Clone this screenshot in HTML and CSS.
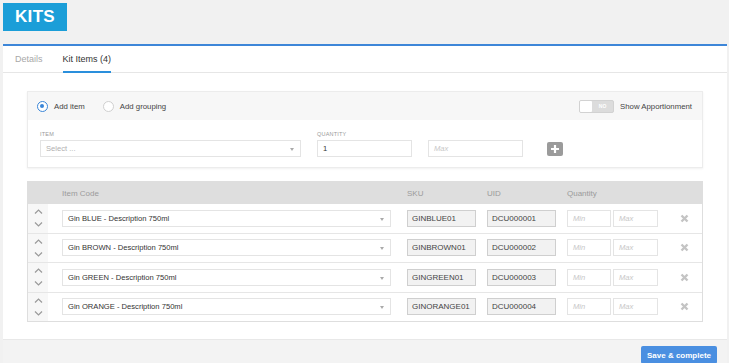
FILE: index.html
```html
<!DOCTYPE html>
<html lang="en">
<head>
    <meta charset="UTF-8">
    <title>Kits</title>
    <link rel="stylesheet" href="styles.css">
</head>
<body>
    <div class="top">
        <div class="badge">KITS</div>
    </div>

    <div class="panel">
        <!-- Tabs -->
        <div class="tabs">
            <span class="tab">Details</span>
            <span class="tab active">Kit Items (4)</span>
        </div>

        <div class="panel-body">
            <!-- Add item card -->
            <div class="card">
                <div class="card-bar">
                    <label class="radio checked"><span class="dot"></span>Add item</label>
                    <label class="radio"><span class="dot"></span>Add grouping</label>
                    <div class="apportion">
                        <span class="toggle"><span class="knob"></span><span class="toggle-text">NO</span></span>
                        Show Apportionment
                    </div>
                </div>
                <div class="card-fields">
                    <div class="field">
                        <div class="field-label">ITEM</div>
                        <div class="select item-select"><span class="placeholder">Select ...</span><span class="caret"></span></div>
                    </div>
                    <div class="field">
                        <div class="field-label">QUANTITY</div>
                        <div class="input qty-input">1</div>
                    </div>
                    <div class="field">
                        <div class="field-label">&nbsp;</div>
                        <div class="input qty-input"><span class="placeholder italic">Max</span></div>
                    </div>
                    <div class="field">
                        <div class="field-label">&nbsp;</div>
                        <span class="btn-plus">
                            <svg width="10" height="10" viewBox="0 0 10 10"><path d="M5 1v8M1 5h8" stroke="#fff" stroke-width="2.2"/></svg>
                        </span>
                    </div>
                </div>
            </div>

            <!-- Items table -->
            <div class="items">
                <div class="row head">
                    <div class="cell move"></div>
                    <div class="cell code">Item Code</div>
                    <div class="cell sku">SKU</div>
                    <div class="cell uid">UID</div>
                    <div class="cell qty">Quantity</div>
                    <div class="cell del"></div>
                </div>
                <div id="itemRows"></div>
            </div>
        </div>

        <div class="footer">
            <button class="btn-save">Save &amp; complete</button>
        </div>
    </div>

    <script>
        const items = [
            { name: "Gin BLUE - Description 750ml", sku: "GINBLUE01", uid: "DCU000001" },
            { name: "Gin BROWN - Description 750ml", sku: "GINBROWN01", uid: "DCU000002" },
            { name: "Gin GREEN - Description 750ml", sku: "GINGREEN01", uid: "DCU000003" },
            { name: "Gin ORANGE - Description 750ml", sku: "GINORANGE01", uid: "DCU000004" }
        ];

        const up = '<svg width="9" height="5" viewBox="0 0 9 5"><path d="M1 4.5L4.5 1 8 4.5" fill="none" stroke="#9a9a9a" stroke-width="1.2"/></svg>';
        const down = '<svg width="9" height="5" viewBox="0 0 9 5"><path d="M1 0.5L4.5 4 8 0.5" fill="none" stroke="#9a9a9a" stroke-width="1.2"/></svg>';
        const cross = '<svg width="9" height="9" viewBox="0 0 9 9"><path d="M1.5 1.5l6 6M7.5 1.5l-6 6" stroke="#c4c4c4" stroke-width="2.4"/></svg>';

        const rows = document.getElementById("itemRows");
        items.forEach(item => {
            const row = document.createElement("div");
            row.className = "row";
            row.innerHTML = `
                <div class="cell move"><span>${up}</span><span>${down}</span></div>
                <div class="cell code"><div class="select row-select">${item.name}<span class="caret"></span></div></div>
                <div class="cell sku"><div class="input readonly">${item.sku}</div></div>
                <div class="cell uid"><div class="input readonly">${item.uid}</div></div>
                <div class="cell qty">
                    <div class="input min"><span class="placeholder italic">Min</span></div>
                    <div class="input max"><span class="placeholder italic">Max</span></div>
                </div>
                <div class="cell del">${cross}</div>
            `;
            rows.appendChild(row);
        });
    </script>
</body>
</html>
```

FILE: styles.css
```css
* {
    margin: 0;
    padding: 0;
    box-sizing: border-box;
}

body {
    font-family: 'Liberation Sans', Arial, sans-serif;
    background-color: #f1f1f1;
    color: #333;
    font-size: 8px;
    overflow: hidden;
}

/* Title badge */
.top {
    padding: 3px 3px 0;
    height: 44px;
}

.badge {
    width: 64px;
    height: 28px;
    background-color: #1b9ed8;
    color: #fff;
    font-size: 17px;
    font-weight: bold;
    display: flex;
    align-items: center;
    justify-content: center;
    letter-spacing: 0.3px;
}

/* Main panel */
.panel {
    margin: 0 2px 0 3px;
    background-color: #fff;
    border-top: 2px solid #3d86d8;
}

.tabs {
    display: flex;
    gap: 20px;
    height: 27px;
    padding-left: 12px;
    border-bottom: 1px solid #e6e6e6;
}

.tab {
    display: flex;
    align-items: center;
    font-size: 9px;
    color: #a8a8a8;
    border-bottom: 2px solid transparent;
    margin-bottom: -1px;
    padding-top: 1px;
}

.tab.active {
    color: #333;
    border-bottom-color: #2a8fdc;
}

.panel-body {
    padding: 18px 24px 17px;
}

/* Add item card */
.card {
    border: 1px solid #ececec;
    box-shadow: 0 1px 2px rgba(0, 0, 0, 0.06);
    margin-bottom: 13px;
}

.card-bar {
    display: flex;
    align-items: center;
    height: 28px;
    padding: 0 10px 0 9px;
    background-color: #f7f7f7;
    font-size: 7.8px;
}

.radio {
    display: flex;
    align-items: center;
    gap: 6px;
    margin-right: 18px;
    color: #444;
}

.radio .dot {
    width: 11px;
    height: 11px;
    border-radius: 50%;
    border: 1.5px solid #d0d0d0;
    background-color: #fff;
    position: relative;
}

.radio.checked .dot {
    border-color: #3a86d8;
}

.radio.checked .dot::after {
    content: "";
    position: absolute;
    left: 2px;
    top: 2px;
    width: 4px;
    height: 4px;
    border-radius: 50%;
    background-color: #3a86d8;
}

.apportion {
    margin-left: auto;
    display: flex;
    align-items: center;
    gap: 6px;
    color: #444;
}

.toggle {
    display: flex;
    align-items: center;
    width: 35px;
    height: 13px;
    background-color: #dcdcdc;
    border: 1px solid #d2d2d2;
    border-radius: 2px;
}

.toggle .knob {
    width: 12px;
    height: 11px;
    background-color: #fff;
    border-radius: 1px;
}

.toggle-text {
    flex: 1;
    text-align: center;
    font-size: 5px;
    font-weight: bold;
    color: #fff;
}

.card-fields {
    display: flex;
    gap: 16px;
    padding: 11px 13px 10px 12px;
}

.field {
    display: flex;
    flex-direction: column;
}

.field-label {
    font-size: 5.5px;
    color: #9a9a9a;
    height: 8px;
    margin-bottom: 1px;
    letter-spacing: 0.2px;
}

.select,
.input {
    height: 17px;
    border: 1px solid #e4e4e4;
    background-color: #fff;
    display: flex;
    align-items: center;
    padding: 0 5px;
    font-size: 7.6px;
    color: #333;
    position: relative;
    white-space: nowrap;
}

.placeholder {
    color: #b0b0b0;
}

.placeholder.italic {
    font-style: italic;
    color: #c8c8c8;
}

.caret {
    position: absolute;
    right: 6px;
    top: 7px;
    border-left: 2.5px solid transparent;
    border-right: 2.5px solid transparent;
    border-top: 3px solid #aaa;
}

.item-select {
    width: 261px;
}

.qty-input {
    width: 95px;
}

.btn-plus {
    margin: 2px 0 0 8px;
    width: 16px;
    height: 14px;
    border-radius: 2px;
    background-color: #9b9b9b;
    display: flex;
    align-items: center;
    justify-content: center;
}

/* Items table */
.items {
    border: 1px solid #dedede;
}

.row {
    display: grid;
    grid-template-columns: 20px 352px 80px 80px 105px 1fr;
    height: 29.5px;
    border-bottom: 1px solid #e6e6e6;
}

.row:last-child {
    border-bottom: none;
    height: 28.5px;
}

.row.head {
    height: 22px;
    background-color: #dedede;
    border-bottom: none;
    color: #9b9b9b;
}

.cell {
    display: flex;
    align-items: center;
    padding-left: 7px;
}

.cell.code {
    padding-left: 14px;
}

.cell.move {
    padding: 0;
    flex-direction: column;
    justify-content: center;
    gap: 8px;
    background-color: #f7f7f7;
}

.row.head .cell.move {
    background-color: transparent;
}

.cell.move span {
    display: flex;
}

.cell.del {
    padding-left: 15px;
}

.row-select {
    width: 329px;
}

.input.readonly {
    width: 69px;
    background-color: #f2f2f2;
    border-color: #cfcfcf;
    font-size: 8px;
    color: #444;
    padding: 0 4px;
}

.input.min {
    width: 44px;
    margin-right: 2px;
}

.input.max {
    width: 45px;
}

/* Footer */
.footer {
    display: flex;
    justify-content: flex-end;
    background-color: #f3f3f3;
    border-top: 1px solid #e8e8e8;
    padding: 6px 10px 6px 0;
}

.btn-save {
    width: 76px;
    height: 18px;
    border: none;
    border-radius: 2px;
    background-color: #4a8fe1;
    color: #fff;
    font-family: inherit;
    font-size: 8px;
    font-weight: bold;
}
```
